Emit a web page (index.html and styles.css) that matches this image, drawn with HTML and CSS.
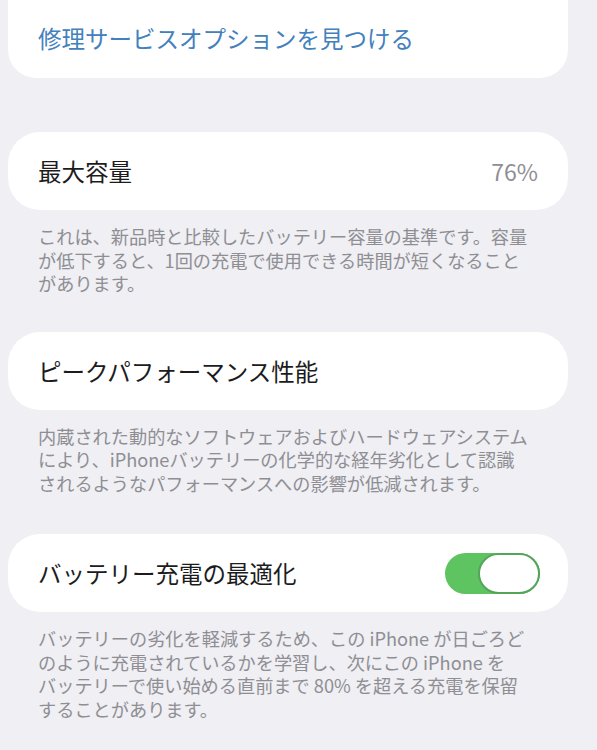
FILE: index.html
```html
<!DOCTYPE html>
<html lang="ja">
<head>
    <meta charset="UTF-8">
    <meta name="viewport" content="width=device-width, initial-scale=1.0">
    <title>バッテリーの状態</title>
    <link rel="stylesheet" href="styles.css">
</head>
<body>

<div class="page">
    <div class="card card-top">
        <a class="link" href="#">修理サービスオプションを見つける</a>
    </div>

    <div class="group">
        <div class="card row">
            <span class="label">最大容量</span>
            <span class="value">76%</span>
        </div>
        <p class="note">これは、新品時と比較したバッテリー容量の基準です。容量<br>が低下すると、1回の充電で使用できる時間が短くなること<br>があります。</p>
    </div>

    <div class="group">
        <div class="card row">
            <span class="label">ピークパフォーマンス性能</span>
        </div>
        <p class="note">内蔵された動的なソフトウェアおよびハードウェアシステム<br>により、iPhoneバッテリーの化学的な経年劣化として認識<br>されるようなパフォーマンスへの影響が低減されます。</p>
    </div>

    <div class="group">
        <div class="card row">
            <span class="label">バッテリー充電の最適化</span>
            <span class="toggle"><span class="knob"></span></span>
        </div>
        <p class="note">バッテリーの劣化を軽減するため、この iPhone が日ごろど<br>のように充電されているかを学習し、次にこの iPhone を<br>バッテリーで使い始める直前まで 80% を超える充電を保留<br>することがあります。</p>
    </div>
</div>

</body>
</html>
```

FILE: styles.css
```css
body {
    margin: 0;
    padding: 0;
    background-color: #efeff4;
    font-family: "Noto Sans CJK JP", "Noto Sans", sans-serif;
    overflow: hidden;
}

.page {
    padding: 0 29px 0 8px;
}

.card {
    background: #fff;
    border-radius: 32px;
}

.card-top {
    margin-top: -40px;
    padding: 62px 30px 24px;
    border-radius: 28px;
}

.link {
    color: #4381bd;
    text-decoration: none;
    font-size: 23.5px;
    line-height: 32px;
}

.group {
    margin-top: 54px;
}

.group + .group {
    margin-top: 36px;
}

.group:last-child {
    margin-top: 39px;
}

.row {
    height: 78px;
    padding: 0 30px;
    display: flex;
    align-items: center;
    justify-content: space-between;
}

.label {
    color: #1c1c1e;
    font-size: 23.5px;
}

.value {
    color: #8e8e93;
    font-size: 23px;
}

.note {
    margin: 15px 0 0;
    padding: 0 30px;
    color: #8e8e93;
    font-size: 18.2px;
    line-height: 23.5px;
    white-space: nowrap;
}

.toggle {
    width: 95px;
    height: 41px;
    border-radius: 21px;
    background: #5ec462;
    display: flex;
    justify-content: flex-end;
    margin-right: -2px;
}

.knob {
    width: 58px;
    height: 37px;
    border-radius: 21px;
    background: #fff;
    border: 2px solid #54a45a;
}
```
